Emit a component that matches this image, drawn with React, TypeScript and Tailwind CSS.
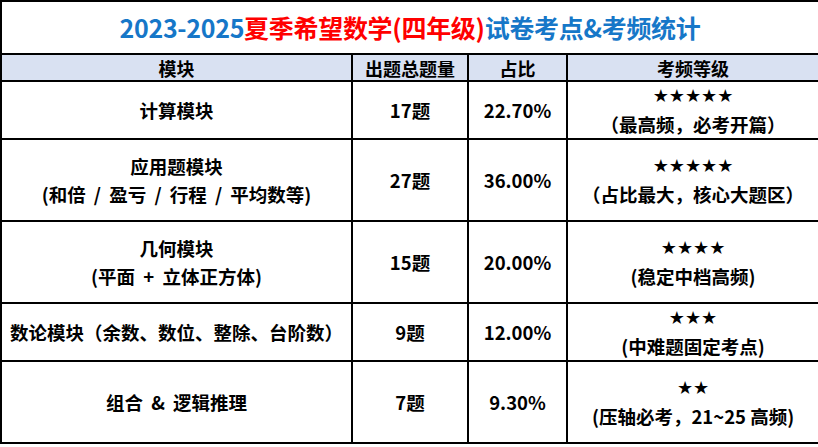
const rows = [
  { name: ["计算模块"], count: "17题", pct: "22.70%", stars: "★★★★★", note: "（最高频，必考开篇）", h: "h-[54px]" },
  { name: ["应用题模块", "(和倍 / 盈亏 / 行程 / 平均数等)"], count: "27题", pct: "36.00%", stars: "★★★★★", note: "（占比最大，核心大题区）", h: "h-[82px]" },
  { name: ["几何模块", "(平面 + 立体正方体)"], count: "15题", pct: "20.00%", stars: "★★★★", note: "(稳定中档高频)", h: "h-[82px]" },
  { name: ["数论模块（余数、数位、整除、台阶数）"], count: "9题", pct: "12.00%", stars: "★★★", note: "(中难题固定考点)", h: "h-[55px]" },
  { name: ["组合 & 逻辑推理"], count: "7题", pct: "9.30%", stars: "★★", note: "(压轴必考，21~25 高频)", h: "h-[82px]" },
];

export default function App() {
  return (
    <div className="w-[818px] h-[447px] overflow-hidden bg-white font-['Microsoft_YaHei','Noto_Sans_CJK_SC',sans-serif] text-black">
      <table className="w-[818px] table-fixed border-collapse">
        <colgroup>
          <col className="w-[351px]" />
          <col className="w-[116px]" />
          <col className="w-[99px]" />
          <col className="w-[252px]" />
        </colgroup>
        <tbody>
          {/* Title */}
          <tr className="h-[53px]">
            <td colSpan={4} className="border-2 border-black text-center text-[25px] font-bold tracking-[-0.3px]">
              <span className="text-[#1677c8]">2023-2025</span>
              <span className="text-[#f00]">夏季希望数学(四年级)</span>
              <span className="text-[#1677c8]">试卷考点&amp;考频统计</span>
            </td>
          </tr>

          {/* Header */}
          <tr className="h-[27px] bg-[#d9e1f2] text-[18px] font-bold leading-[24px]">
            <td className="border-2 border-black text-center">模块</td>
            <td className="border-2 border-black text-center">出题总题量</td>
            <td className="border-2 border-black text-center">占比</td>
            <td className="border-2 border-black text-center">考频等级</td>
          </tr>

          {rows.map((r) => (
            <tr key={r.count} className={`${r.h} text-[18.5px] font-bold leading-[28px]`}>
              <td className="border-2 border-black text-center whitespace-nowrap [word-spacing:4px]">
                {r.name.map((n) => (
                  <div key={n}>{n}</div>
                ))}
              </td>
              <td className="border-2 border-black text-center">{r.count}</td>
              <td className="border-2 border-black text-center">{r.pct}</td>
              <td className="border-2 border-black text-center whitespace-nowrap">
                <div className="font-['DejaVu_Sans',sans-serif] text-[18px] font-bold leading-[28px]">{r.stars}</div>
                <div>{r.note}</div>
              </td>
            </tr>
          ))}
        </tbody>
      </table>
    </div>
  );
}
